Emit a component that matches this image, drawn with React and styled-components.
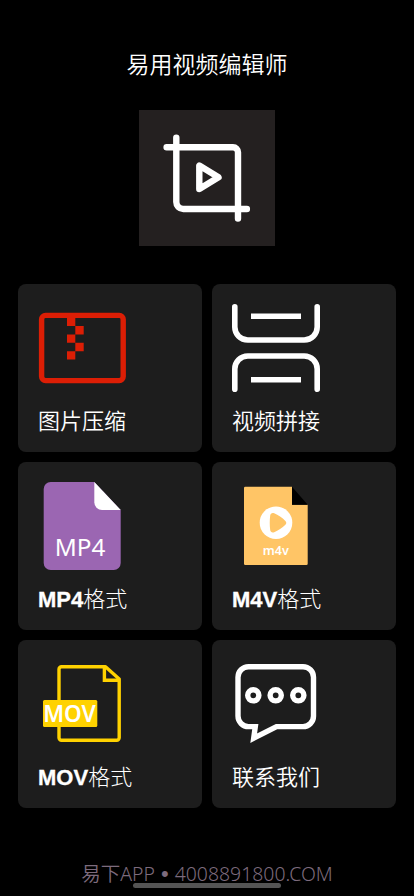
import React from "react";
import styled, { createGlobalStyle } from "styled-components";

const App = () => {
  return (
    <>
      <GlobalStyle />
      <Page>
        <Title>易用视频编辑师</Title>
        <LogoBox>
          <CropLogo />
        </LogoBox>
        <Grid>
          {menus.map(({ latin, text, Icon }) => (
            <Card key={latin + text}>
              <Icon />
              <Label $light={latin !== ""}>
                {latin && <Latin>{latin}</Latin>}
                {text}
              </Label>
            </Card>
          ))}
        </Grid>
        <Footer>
          <Contact>
            <span>易下</span>
            <ContactLatin>
              APP <Dot>•</Dot> 4008891800.COM
            </ContactLatin>
          </Contact>
          <HomeBar />
        </Footer>
      </Page>
    </>
  );
};

const CropLogo = () => (
  <svg width="136" height="136" viewBox="0 0 136 136" fill="none" stroke="#fff" strokeWidth="6.4" strokeLinecap="round" strokeLinejoin="round">
    <path d="M37.3 27.6V92a7 7 0 0 0 7 7h63.6" />
    <path d="M27.6 37.3H94a5 5 0 0 1 5 5v66.2" />
    <path d="M60.3 55.6V79l19.2-11.7z" />
  </svg>
);

const ZipIcon = () => (
  <IconSvg viewBox="0 0 88 88">
    <rect x="3.6" y="11.4" width="81.6" height="65.2" rx="4" fill="none" stroke="#dc1e05" strokeWidth="5.4" />
    <path
      fill="#dc1e05"
      d="M29 13h8.3v9H29zM37.3 22h8.4v8.4h-8.4zM29 30.4h8.3v8.4H29zM37.3 38.8h8.4v8.4h-8.4zM29 47.2h8.3v8.3H29z"
    />
  </IconSvg>
);

const SpliceIcon = () => (
  <IconSvg viewBox="0 0 88 88" fill="none" stroke="#fff" strokeWidth="5.6">
    <path strokeLinecap="round" d="M2.8 2.8V23a13 13 0 0 0 13 13h56.4a13 13 0 0 0 13-13V2.8" />
    <path d="M19 12.3h50M19 75.7h50" />
    <path strokeLinecap="round" d="M2.8 85.2V65a13 13 0 0 1 13-13h56.4a13 13 0 0 1 13 13v20.2" />
  </IconSvg>
);

const Mp4Icon = () => (
  <IconSvg viewBox="0 0 88 88">
    <path fill="#9b66b2" d="M12.7 0h43.6l26.4 28v53a7 7 0 0 1-7 7h-63a7 7 0 0 1-7-7V7a7 7 0 0 1 7-7z" />
    <path fill="#fff" d="M56.3 0l26.4 28H64a7.7 7.7 0 0 1-7.7-7.700z" />
    <IconText x="16.8" y="74" fontSize="23" fontWeight="400" textLength="50.6" lengthAdjust="spacingAndGlyphs">
      MP4
    </IconText>
  </IconSvg>
);

const M4vIcon = () => (
  <IconSvg viewBox="0 0 88 88">
    <path fill="#ffc566" d="M13.3 4.7H60v18h15.7v59a1.3 1.3 0 0 1-1.3 1.3H13.3a1.3 1.3 0 0 1-1.3-1.3V6a1.3 1.3 0 0 1 1.3-1.3z" />
    <path fill="#000" d="M60 4.7l15.7 18H60z" />
    <circle cx="44" cy="40.7" r="16.3" fill="#fff" />
    <path
      fill="#ffc566"
      d="M38.2 33.5c.2-2 2-3.1 4-2.2 4 1.8 8 4.5 11.2 7.6 1.2 1.2 1.2 2.6 0 3.8-3.2 3.1-7.2 5.7-11.2 7.5-2 .9-3.8-.2-4-2.2-.6-4.8-.6-9.7 0-14.5z"
    />
    <IconText x="30.8" y="73.3" fontSize="12.8" fontWeight="600" textLength="26" lengthAdjust="spacingAndGlyphs">
      m4v
    </IconText>
  </IconSvg>
);

const MovIcon = () => (
  <IconSvg viewBox="0 0 88 88">
    <g fill="none" stroke="#ffd200" strokeWidth="3.4" strokeLinejoin="round">
      <path d="M23.5 6.7h44L81.2 19v58.8a2.5 2.5 0 0 1-2.5 2.5H23.5a2.5 2.5 0 0 1-2.5-2.5V9.2a2.5 2.5 0 0 1 2.5-2.5z" />
      <path strokeLinejoin="miter" d="M66.4 7v13.3h15" />
    </g>
    <rect x="5" y="40" width="54.3" height="27" rx="1.5" fill="#ffd200" />
    <IconText x="5.2" y="62" fontSize="23" fontWeight="600" textLength="52.6" lengthAdjust="spacingAndGlyphs">
      MOV
    </IconText>
  </IconSvg>
);

const ChatIcon = () => (
  <IconSvg viewBox="0 0 88 88" fill="none" stroke="#fff" strokeWidth="5.4">
    <path d="M16.5 6.7H71a10.5 10.5 0 0 1 10.5 10.5V56A10.5 10.5 0 0 1 71 66.6H44.5L21.7 78.2l1.6-11.6h-6.8A10.5 10.5 0 0 1 6 56V17.2A10.5 10.5 0 0 1 16.5 6.7z" />
    <circle cx="21.3" cy="35.3" r="5.6" />
    <circle cx="43.7" cy="35.3" r="5.6" />
    <circle cx="66.3" cy="35.3" r="5.6" />
  </IconSvg>
);

const GlobalStyle = createGlobalStyle`
  body {
    margin: 0;
    background: #000;
  }
`;
const Page = styled.div`
  display: flex;
  flex-direction: column;
  align-items: center;
  box-sizing: border-box;
  width: 414px;
  height: 896px;
  padding-top: 46px;
  overflow: hidden;
  background: #000;
  color: #fff;
  font-family: "Noto Sans CJK SC", sans-serif;
  font-weight: 350;
`;
const Title = styled.div`
  height: 34px;
  line-height: 34px;
  font-size: 23px;
`;
const LogoBox = styled.div`
  width: 136px;
  height: 136px;
  margin-top: 30px;
  background: #242020;
`;
const Grid = styled.div`
  display: grid;
  grid-template-columns: 184px 184px;
  grid-auto-rows: 168px;
  gap: 10px;
  margin-top: 38px;
`;
const Card = styled.div`
  display: flex;
  flex-direction: column;
  box-sizing: border-box;
  padding: 20px;
  border-radius: 8px;
  background: #1d1d1d;
`;
const IconSvg = styled.svg`
  display: block;
  flex: none;
  width: 88px;
  height: 88px;
`;
const IconText = styled.text`
  fill: #fff;
  font-family: "Noto Sans", sans-serif;
`;
const Label = styled.div`
  height: 32px;
  margin-top: 11px;
  line-height: 32px;
  font-size: 22px;
  font-weight: ${({ $light }) => ($light ? 300 : 350)};
  white-space: nowrap;
`;
const Latin = styled.span`
  font-family: "Liberation Sans", sans-serif;
  font-weight: 700;
  -webkit-text-stroke: 0.3px #fff;
`;
const Footer = styled.div`
  display: flex;
  flex-direction: column;
  align-items: center;
  margin-top: 51px;
`;
const Contact = styled.div`
  height: 28px;
  line-height: 28px;
  font-size: 19.5px;
  color: #7d6b7d;
  white-space: nowrap;
`;
const ContactLatin = styled.span`
  font-family: "Noto Sans", sans-serif;
  font-size: 19.4px;
`;
const Dot = styled.span`
  margin: 0 1px;
  font-family: "Liberation Sans", sans-serif;
  font-size: 22px;
  line-height: 1;
`;
const HomeBar = styled.div`
  position: relative;
  width: 148px;
  height: 5px;
  margin-top: -4px;
  border-radius: 3px;
  background: #545454;
`;

const menus = [
  { latin: "", text: "图片压缩", Icon: ZipIcon },
  { latin: "", text: "视频拼接", Icon: SpliceIcon },
  { latin: "MP4", text: "格式", Icon: Mp4Icon },
  { latin: "M4V", text: "格式", Icon: M4vIcon },
  { latin: "MOV", text: "格式", Icon: MovIcon },
  { latin: "", text: "联系我们", Icon: ChatIcon },
];

export default App;
